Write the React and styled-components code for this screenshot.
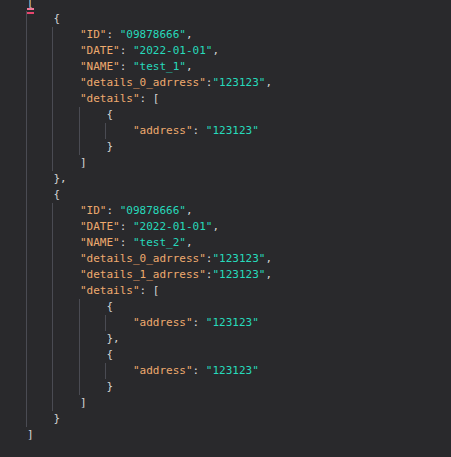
import React from 'react';
import styled, { createGlobalStyle } from 'styled-components';

const Global = createGlobalStyle`
  html, body {
    margin: 0;
    padding: 0;
    background: #29292c;
    height: 100%;
    overflow: hidden;
  }
`

const Editor = styled.div`
  background: #29292c;
  height: 457px;
  padding-left: 26px;
  font-family: "DejaVu Sans Mono", "Liberation Mono", monospace;
  font-size: 11px;
  color: #d4d4d4;
  overflow: hidden;
`
const Code = styled.div`
  margin-top: -5px;
`
const Line = styled.div`
  position: relative;
  display: flex;
  height: 16px;
  line-height: 16px;
  white-space: pre;
`
const Guide = styled.span`
  display: inline-block;
  width: 4ch;
  height: 16px;
  box-sizing: border-box;
  border-left: 1px solid #4a4b53;
`
const Text = styled.span`
  padding-left: 1px;
`
const Key = styled.span`
  color: #eeaa6e;
`
const Str = styled.span`
  color: #27d9bb;
`
const ErrorMark = styled.span`
  position: absolute;
  left: 1px;
  top: 13px;
  width: 7px;
  height: 6px;
  box-sizing: border-box;
  border-top: 2px solid #f07a9a;
  border-bottom: 2px solid #e8456e;
`

const src = `[
    {
        "ID": "09878666",
        "DATE": "2022-01-01",
        "NAME": "test_1",
        "details_0_adrress":"123123",
        "details": [
            {
                "address": "123123"
            }
        ]
    },
    {
        "ID": "09878666",
        "DATE": "2022-01-01",
        "NAME": "test_2",
        "details_0_adrress":"123123",
        "details_1_adrress":"123123",
        "details": [
            {
                "address": "123123"
            },
            {
                "address": "123123"
            }
        ]
    }
]`

function tokens(text) {
  const parts = text.match(/"[^"]*"|[^"]+/g) || []
  return parts.map((p, i) => {
    if (p[0] === '"') {
      const next = parts[i + 1] || ''
      return next.trim().startsWith(':')
        ? <Key key={i}>{p}</Key>
        : <Str key={i}>{p}</Str>
    }
    return <span key={i}>{p}</span>
  })
}

const lines = src.split('\n').map(l => {
  const spaces = l.length - l.trimStart().length
  return { level: spaces / 4, text: l.trimStart() }
})

export default function App() {
  return (
    <Editor>
      <Global />
      <Code>
        {lines.map((l, i) => (
          <Line key={i}>
            {Array.from({ length: l.level }).map((_, g) => <Guide key={g} />)}
            <Text>{tokens(l.text)}</Text>
            {i === 0 && <ErrorMark />}
          </Line>
        ))}
      </Code>
    </Editor>
  )
}
